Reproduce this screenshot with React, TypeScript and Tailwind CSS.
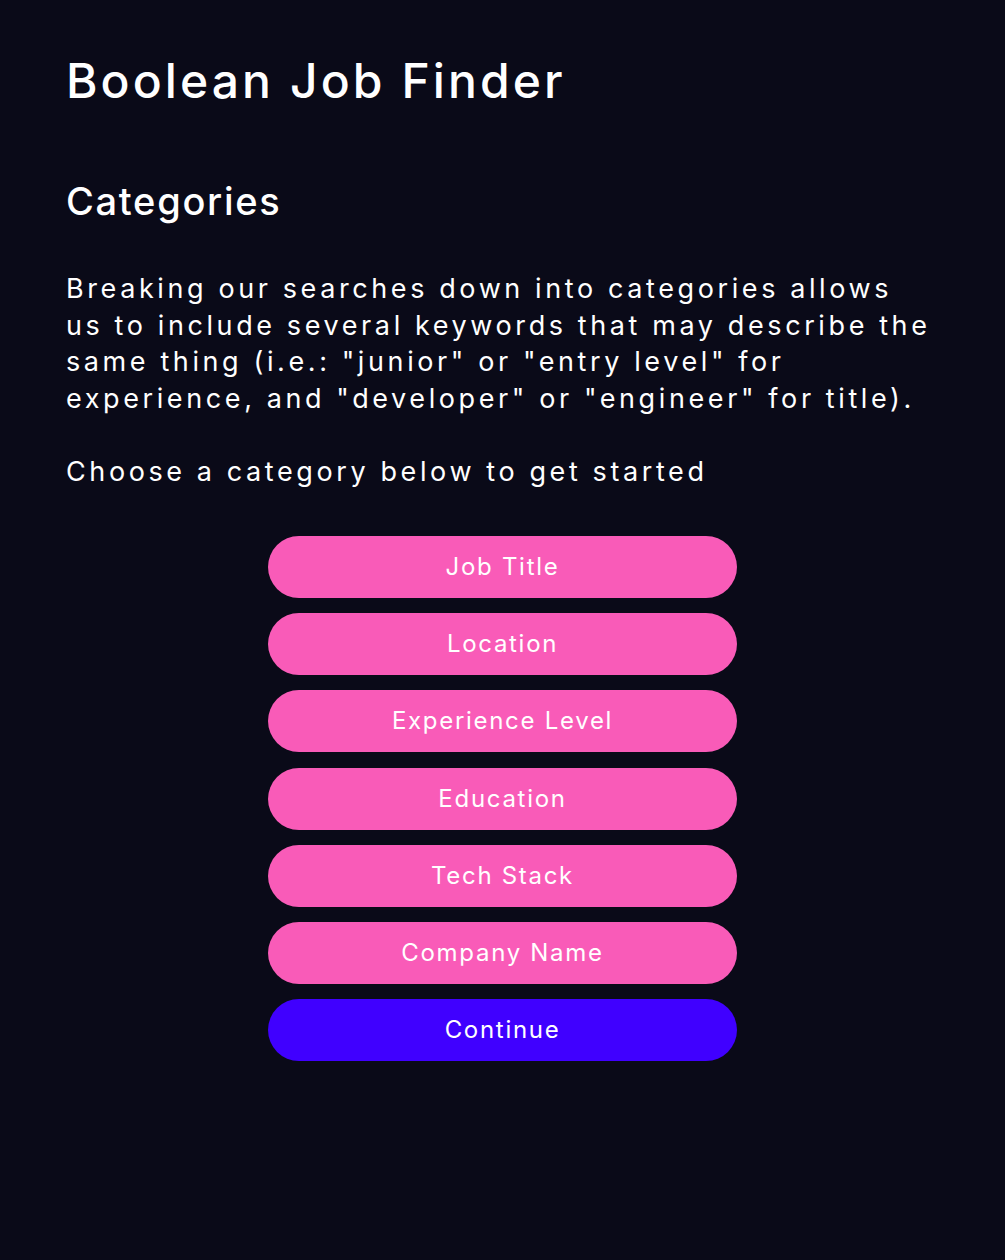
import React from "react";

const categories = [
  "Job Title",
  "Location",
  "Experience Level",
  "Education",
  "Tech Stack",
  "Company Name",
];

export default function App() {
  return (
    <div
      className="min-h-[1260px] w-full bg-[#0a0a18] text-white px-[66px] pt-[52px]"
      style={{ fontFamily: "Inter, 'Liberation Sans', sans-serif" }}
    >
      <h1 className="text-[48px] leading-[58px] font-medium tracking-[3.1px]">Boolean Job Finder</h1>
      <h2 className="mt-[68px] text-[38px] leading-[46px] font-medium tracking-[1.7px]">Categories</h2>
      <p className="mt-[47px] text-[27px] leading-[36.5px] tracking-[3.6px] whitespace-nowrap">
        Breaking our searches down into categories allows
        <br />
        us to include several keywords that may describe the
        <br />
        same thing (i.e.: "junior" or "entry level" for
        <br />
        experience, and "developer" or "engineer" for title).
      </p>
      <p className="mt-[36.5px] text-[27px] leading-[36.5px] tracking-[3.6px] whitespace-nowrap">
        Choose a category below to get started
      </p>
      <div className="mt-[46px] flex flex-col items-center gap-[15.2px]">
        {categories.map((c) => (
          <button
            key={c}
            className="w-[469px] h-[62px] rounded-full bg-[#f95bb8] text-white text-[24px] tracking-[1.7px]"
          >
            {c}
          </button>
        ))}
        <button className="w-[469px] h-[62px] rounded-full bg-[#4000ff] text-white text-[24px] tracking-[1.7px]">
          Continue
        </button>
      </div>
    </div>
  );
}
